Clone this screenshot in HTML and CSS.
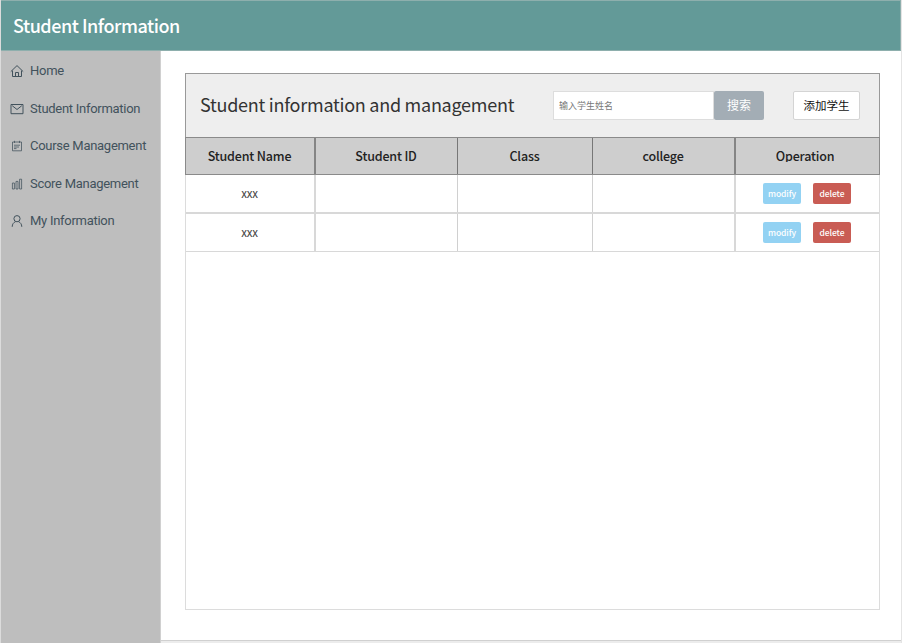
FILE: index.html
```html
<!DOCTYPE html>
<html lang="en">
<head>
<meta charset="utf-8">
<title>Student Information</title>
<link rel="stylesheet" href="styles.css">
</head>
<body>
<div class="app">
  <header class="topbar"><h1>Student Information</h1></header>
  <div class="body">
    <nav class="sidebar">
      <a class="nav-item"><svg class="icon" viewBox="0 0 14 14"><path d="M.8 7.6 7 1.6l6.2 6M2.5 6.6v5.9h9V6.6M5.5 12.5v-4h3v4"/></svg><span>Home</span></a>
      <a class="nav-item"><svg class="icon" viewBox="0 0 14 14"><path d="M1 2.5h12v9.2H1zM2.2 3.7 7 7.5l4.8-3.8"/></svg><span>Student Information</span></a>
      <a class="nav-item"><svg class="icon thin" viewBox="0 0 14 14"><path d="M2.5 3h9v8.8h-9zM4.5 1.8V4M9.5 1.8V4M4 6.2h6M4 8h5M4 9.6h2.5"/></svg><span>Course Management</span></a>
      <a class="nav-item"><svg class="icon thin" viewBox="0 0 14 14"><path d="M2.4 6h2v6h-2zM6 4.4h2V12H6zM9.6 2.2h2V12h-2z"/></svg><span>Score Management</span></a>
      <a class="nav-item"><svg class="icon" viewBox="0 0 14 14"><circle cx="7" cy="4.7" r="3.1"/><path d="M2.2 12.8c0-2.8 1.6-4.4 3.3-5.1M11.8 12.8c0-2.8-1.6-4.4-3.3-5.1"/></svg><span>My Information</span></a>
    </nav>
    <main class="content">
      <section class="panel">
        <div class="panel-head">
          <h2>Student information and management</h2>
          <div class="search">
            <input type="text" placeholder="输入学生姓名">
            <button class="search-btn">搜索</button>
          </div>
          <button class="add-btn">添加学生</button>
        </div>
        <div class="row head">
          <div>Student Name</div><div>Student ID</div><div>Class</div><div>college</div><div><span class="clip">Operation</span></div>
        </div>
        <div class="row">
          <div>xxx</div><div></div><div></div><div></div>
          <div class="ops"><button class="modify">modify</button><button class="delete">delete</button></div>
        </div>
        <div class="row">
          <div>xxx</div><div></div><div></div><div></div>
          <div class="ops"><button class="modify">modify</button><button class="delete">delete</button></div>
        </div>
      </section>
    </main>
  </div>
</div>
</body>
</html>
```
FILE: styles.css
```css
* { box-sizing: border-box; }
body { margin: 0; background: #fff; font-family: "Noto Sans CJK SC", sans-serif; overflow: hidden; }
button, input { font-family: inherit; margin: 0; padding: 0; border: 0; }
.app { width: 902px; height: 643px; display: flex; flex-direction: column; border-left: 1px solid #dcdcdc; border-right: 1px solid #e4e4e4; }
.topbar { height: 51px; flex: none; background: #639a98; border: 1px solid #8eafad; border-left: 0; display: flex; align-items: center; padding: 0 0 1px 12px; }
h1 { margin: 0; font-size: 18px; font-weight: 500; color: #fff; line-height: 26px; letter-spacing: -.46px; }
.body { flex: 1; display: flex; min-height: 0; }
.sidebar { width: 160px; background: #bebebe; border-right: 1px solid #d0d0d0; display: flex; flex-direction: column; padding-top: 1px; }
.nav-item { height: 37px; display: flex; align-items: center; gap: 6px; padding-left: 9px; font: 13px/18px Roboto, sans-serif; letter-spacing: -.28px; color: #42525c; }
.nav-item:nth-child(odd) { height: 38px; }
.icon { width: 14px; height: 14px; fill: none; stroke: #42525c; stroke-width: 1; }
.icon.thin { stroke-width: .75; }
.nav-item:nth-child(even) { padding-top: 1px; }
.content { flex: 1; padding: 22px 21px 30px 24px; border-bottom: 1px solid #d0d0d0; margin-bottom: 2px; display: flex; }
.body { background: linear-gradient(#fff, #fff) no-repeat 0 0 / 100% calc(100% - 2px), #ececec; }
.panel { flex: 1; border: 1px solid #dcdcdc; display: flex; flex-direction: column; }
.panel-head { height: 64px; flex: none; margin: -1px -1px 0; border: 1px solid #999; border-bottom: 0; background: #eee; display: flex; align-items: center; padding-left: 14px; }
h2 { margin: -3px 0 0; width: 353px; font-size: 18px; line-height: 26px; font-weight: 400; color: #333; white-space: nowrap; letter-spacing: -.26px; }
.search { display: flex; width: 211px; }
.search input { width: 161px; height: 29px; background: #fff; border: 1px solid #ddd; padding-left: 5px; font-size: 9px; min-width: 0; }
.search input::placeholder { color: #777; }
.search-btn { width: 50px; height: 29px; background: #a3adb5; color: #fff; font-size: 12px; line-height: 16px; padding-bottom: 1px; border-radius: 2px; }
.add-btn { width: 67px; height: 29px; margin-left: 29px; background: #fff; border: 1px solid #d4d4d4; border-radius: 2px; font-size: 11.5px; line-height: 16px; padding-bottom: 1px; color: #111; }
.row { display: grid; grid-template-columns: 130px 142px 135px 143px 1fr; height: 39px; flex: none; border-bottom: 2px solid #d8d8d8; font-size: 11.5px; letter-spacing: -.3px; color: #444; }
.row:last-child { height: 38px; border-bottom-width: 1px; }
.row > div { display: flex; align-items: center; justify-content: center; border-right: 1px solid #d0d0d0; padding: 0 1px 1px 0; }
.row > div:nth-child(1), .row > div:nth-child(4) { border-right: 2px solid #d8d8d8; }
.row > div:last-child { border-right: 0; }
.row.head { height: 38px; margin: 0 -1px; grid-template-columns: 130px 142px 135px 143px 1fr; background: #cecece; border: 1px solid #8a8a8a; font-size: 12.5px; letter-spacing: -.17px; font-weight: 500; color: #222; }
.row.head > div { border-color: #777; padding-bottom: 2px; }
.row.head > div:nth-child(1), .row.head > div:nth-child(4) { border-color: #858585; }
.clip { height: 15px; line-height: 17px; overflow: hidden; display: block; margin: -2px 4px 0 0; }
.ops { gap: 12px; }
.ops button { width: 38px; height: 21px; border-radius: 2px; color: #fff; font-size: 8.5px; line-height: 12px; padding-bottom: 1px; letter-spacing: -.1px; font-weight: 500; }
.modify { background: #93d2f3; }
.delete { background: #c95c54; }
```
